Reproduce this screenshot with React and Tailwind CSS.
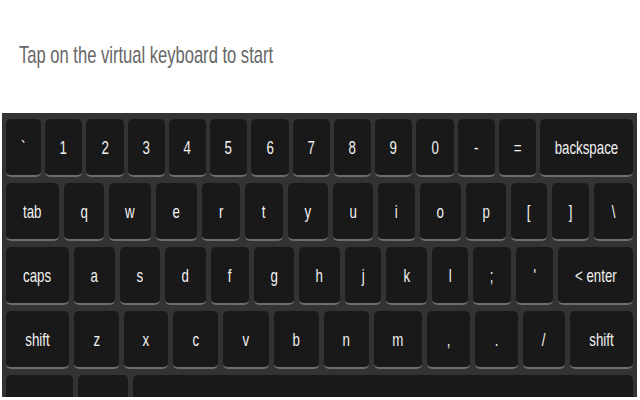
const ROWS = [
  {
    gap: 'gap-1',
    keys: [
      { k: '`', w: 'w-[35px]' },
      { k: '1', w: 'w-[37.25px]' },
      { k: '2', w: 'w-[37.25px]' },
      { k: '3', w: 'w-[37.25px]' },
      { k: '4', w: 'w-[37.25px]' },
      { k: '5', w: 'w-[37.25px]' },
      { k: '6', w: 'w-[37.25px]' },
      { k: '7', w: 'w-[37.25px]' },
      { k: '8', w: 'w-[37.25px]' },
      { k: '9', w: 'w-[37.25px]' },
      { k: '0', w: 'w-[37.25px]' },
      { k: '-', w: 'w-[37.25px]' },
      { k: '=', w: 'w-[37.25px]' },
      { k: 'backspace', w: 'flex-1' },
    ],
  },
  {
    gap: 'gap-[5px]',
    keys: [
      { k: 'tab', w: 'w-[53px]' },
      { k: 'q', w: 'w-[40px]' },
      { k: 'w', w: 'w-[42px]' },
      { k: 'e', w: 'w-[41px]' },
      { k: 'r', w: 'w-[38px]' },
      { k: 't', w: 'w-[38px]' },
      { k: 'y', w: 'w-[40px]' },
      { k: 'u', w: 'w-[40px]' },
      { k: 'i', w: 'w-[37px]' },
      { k: 'o', w: 'w-[41px]' },
      { k: 'p', w: 'w-[40px]' },
      { k: '[', w: 'w-[36px]' },
      { k: ']', w: 'w-[37px]' },
      { k: '\\', w: 'flex-1' },
    ],
  },
  {
    gap: 'gap-[5px]',
    keys: [
      { k: 'caps', w: 'w-[63px]' },
      { k: 'a', w: 'w-[41px]' },
      { k: 's', w: 'w-[40px]' },
      { k: 'd', w: 'w-[41px]' },
      { k: 'f', w: 'w-[38px]' },
      { k: 'g', w: 'w-[40px]' },
      { k: 'h', w: 'w-[41px]' },
      { k: 'j', w: 'w-[36px]' },
      { k: 'k', w: 'w-[41px]' },
      { k: 'l', w: 'w-[36px]' },
      { k: ';', w: 'w-[38px]' },
      { k: "'", w: 'w-[37px]' },
      { k: '< enter', w: 'flex-1' },
    ],
  },
  {
    gap: 'gap-[5px]',
    keys: [
      { k: 'shift', w: 'w-[63px]' },
      { k: 'z', w: 'w-[45px]' },
      { k: 'x', w: 'w-[44px]' },
      { k: 'c', w: 'w-[45px]' },
      { k: 'v', w: 'w-[46px]' },
      { k: 'b', w: 'w-[45px]' },
      { k: 'n', w: 'w-[45px]' },
      { k: 'm', w: 'w-[48px]' },
      { k: ',', w: 'w-[43px]' },
      { k: '.', w: 'w-[43px]' },
      { k: '/', w: 'w-[42px]' },
      { k: 'shift', w: 'flex-1' },
    ],
  },
  {
    gap: 'gap-[5px]',
    keys: [
      { k: '', w: 'w-[67px]' },
      { k: '@', w: 'w-[50px]' },
      { k: '', w: 'flex-1' },
    ],
  },
];

function Key({ label, width }) {
  return (
    <div
      className={`${width} h-[58px] shrink-0 flex items-center justify-center rounded-[5px] bg-[#191919] border-b-2 border-[#6e6e6e]`}
    >
      <span className="inline-block scale-x-[0.7] text-[19px] leading-[19px] text-[#f2f2f2] whitespace-pre">
        {label}
      </span>
    </div>
  );
}

export default function App() {
  return (
    <div className="w-[640px] h-[400px] bg-white overflow-hidden" style={{ fontFamily: '"Liberation Sans", Arial, sans-serif' }}>
      {/* Prompt */}
      <div className="h-[113px] pt-[43px] pl-[19px]">
        <span className="inline-block origin-left scale-x-[0.69] text-[24px] leading-[24px] text-[#666] whitespace-nowrap">
          Tap on the virtual keyboard to start
        </span>
      </div>

      {/* Keyboard */}
      <div className="ml-[2px] w-[635px] h-[284px] overflow-hidden bg-[#333] pt-[6px] px-[4px] flex flex-col gap-[6px]">
        {ROWS.map((row, i) => (
          <div key={i} className={`flex ${row.gap}`}>
            {row.keys.map((key, j) => (
              <Key key={j} label={key.k} width={key.w} />
            ))}
          </div>
        ))}
      </div>
    </div>
  );
}
